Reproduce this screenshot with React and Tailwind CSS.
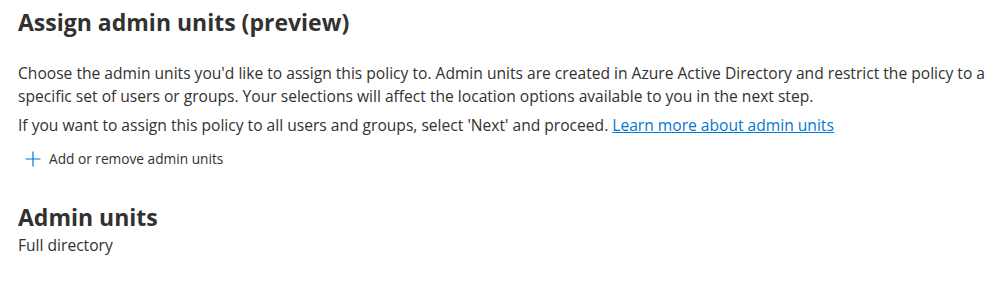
export default function App() {
  return (
    <div className="w-[999px] h-[287px] bg-white pl-[18px] pr-2 pt-[6px] text-[#323130] font-['Open_Sans',sans-serif]">
      <h1 className="text-[23px] leading-[32px] font-bold">Assign admin units (preview)</h1>

      <p className="mt-[24px] text-[15.6px] leading-[23px]">
        Choose the admin units you'd like to assign this policy to. Admin units are created in Azure Active Directory and restrict the policy to a specific set of users or groups. Your selections will affect the location options available to you in the next step.
      </p>
      <p className="mt-[6px] text-[15.6px] leading-[23px]">
        If you want to assign this policy to all users and groups, select 'Next' and proceed.{" "}
        <a href="#" className="text-[#0078d4] underline">Learn more about admin units</a>
      </p>

      <button className="mt-[10px] ml-[7px] flex items-center gap-[8px] h-[24px] text-[13.7px] text-[#323130]">
        <svg width="16" height="16" viewBox="0 0 16 16" fill="none" stroke="#0078d4" strokeWidth="1.2">
          <path d="M8 0.5v15M0.5 8h15" />
        </svg>
        <span>Add or remove admin units</span>
      </button>

      <h2 className="mt-[31px] text-[23px] leading-[30px] font-bold">Admin units</h2>
      <p className="mt-[2px] text-[15.6px] leading-[22px]">Full directory</p>
    </div>
  );
}
